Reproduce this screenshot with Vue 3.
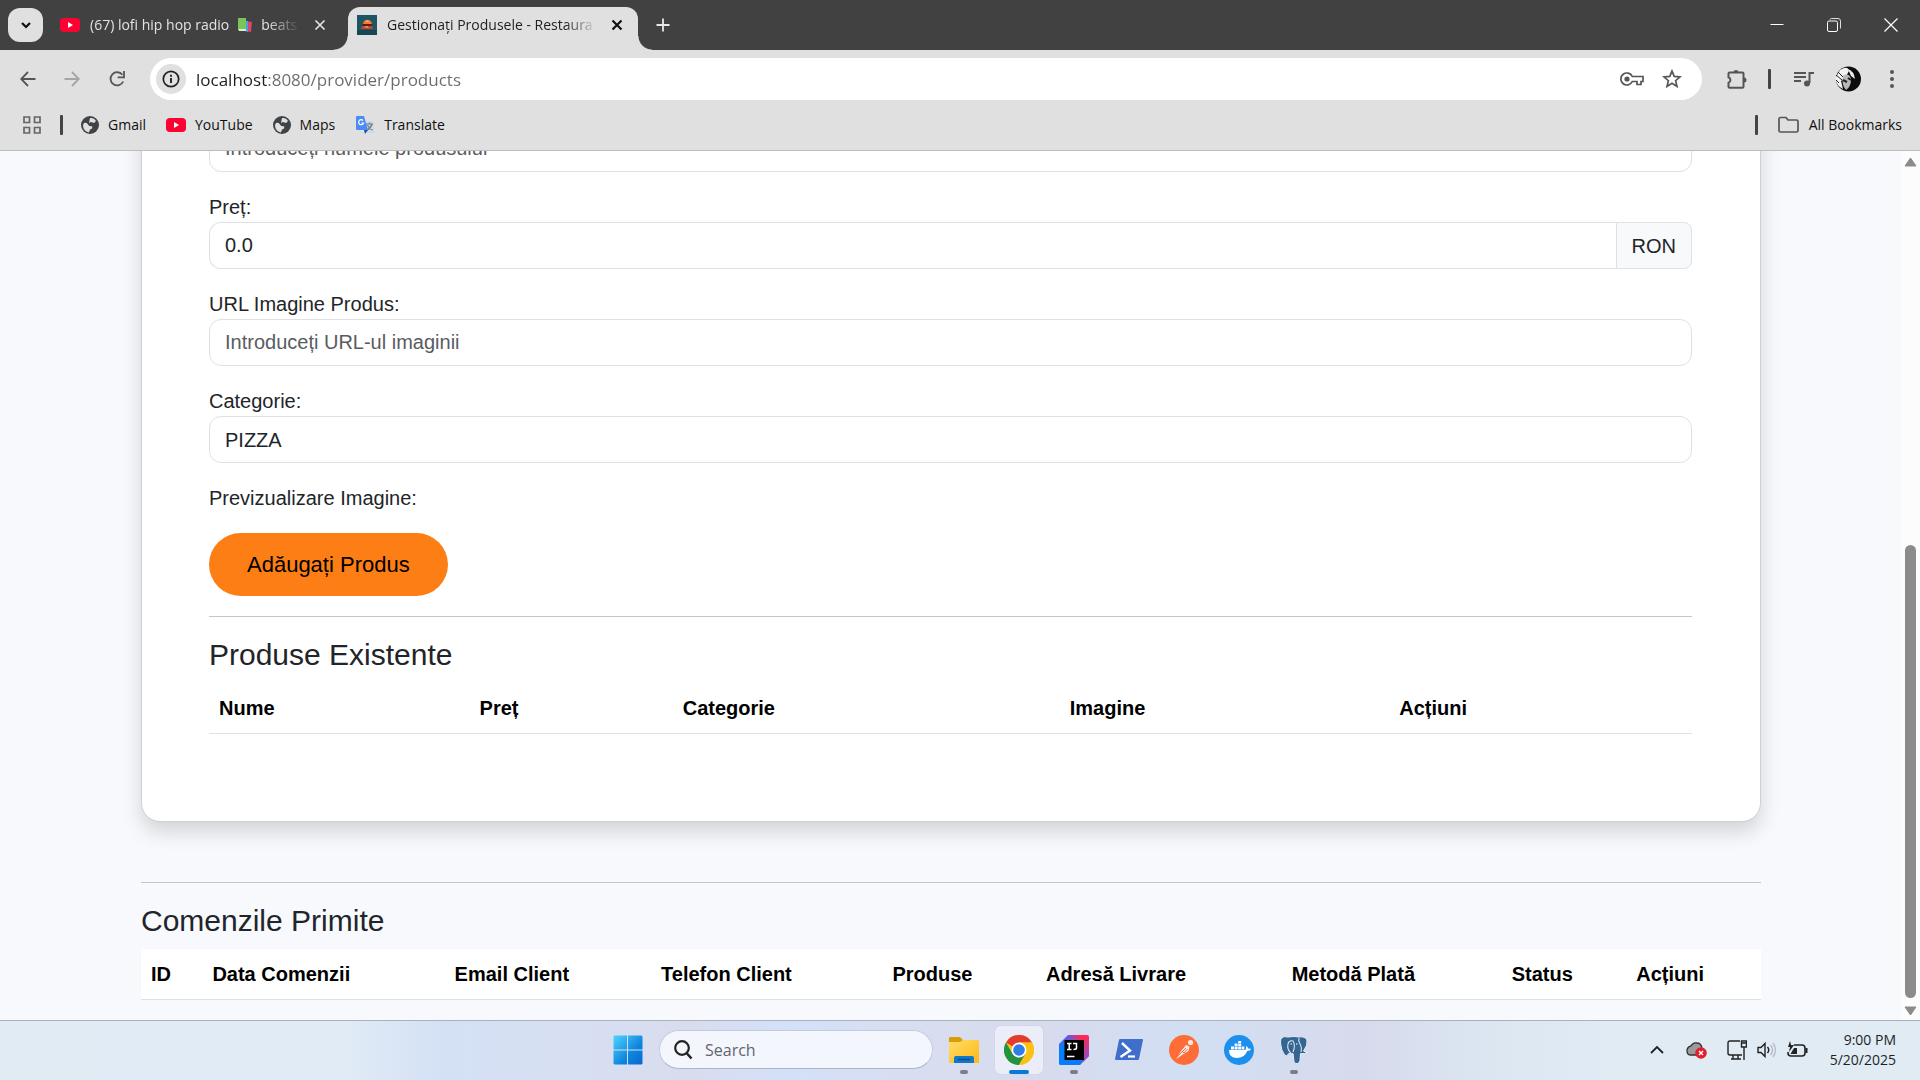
<script setup>
import { ref } from 'vue'

const address = ref('localhost:8080/provider/products')
const productName = ref('')
const price = ref('0.0')
const imageUrl = ref('')
const category = ref('PIZZA')

const productColumns = ['Nume', 'Preț', 'Categorie', 'Imagine', 'Acțiuni']
const orderColumns = [
  'ID',
  'Data Comenzii',
  'Email Client',
  'Telefon Client',
  'Produse',
  'Adresă Livrare',
  'Metodă Plată',
  'Status',
  'Acțiuni',
]
</script>

<template>
  <div class="desktop">
    <header class="browser">
      <div class="tabstrip">
        <button class="tab-search" aria-label="Search tabs">
          <svg width="12" height="12" viewBox="0 0 12 12"><path d="M2 4l4 4 4-4" fill="none" stroke="#111" stroke-width="2.2" /></svg>
        </button>
        <div class="tab">
          <svg class="fav" width="20" height="20" viewBox="0 0 20 20"><rect y="3" width="20" height="14" rx="4" fill="#ff0033" /><path d="M8 7v6l5-3z" fill="#fff" /></svg>
          <span class="tab-title">
            <span>(67) lofi hip hop radio</span>
            <svg width="16" height="16" viewBox="0 0 16 16"><path d="M8 4l7 1-1 10-6-1z" fill="#e2436b" /><path d="M5 3l6 1v11l-6-2z" fill="#37a7e8" /><path d="M1 1h8v11H1z" fill="#7cc35a" /><path d="M1 12h8v2H2z" fill="#d8efcd" /></svg>
            <span>beats</span>
          </span>
          <button class="tab-close" aria-label="Close tab">
            <svg width="12" height="12" viewBox="0 0 12 12"><path d="M1.500 1.500l9 9M10.500 1.500l-9 9" stroke="#e3e3e3" stroke-width="1.700" /></svg>
          </button>
        </div>
        <div class="tab active">
          <svg class="fav" width="20" height="20" viewBox="0 0 20 20"><rect width="20" height="20" fill="#1d5566" /><rect y="15" width="20" height="5" fill="#174654" /><path d="M6 9c0-5 8-6 9 0z" fill="#f07b2c" /><path d="M5 9h11l-2 2H6z" fill="#5b1d16" /><path d="M5 11h10l1 3H4z" fill="#c4432a" /><path d="M8 7l3-2 1 2zM7 12l3-1 2 2z" fill="#ffb060" /></svg>
          <span class="tab-title">Gestionați Produsele - Restaura</span>
          <button class="tab-close" aria-label="Close tab">
            <svg width="12" height="12" viewBox="0 0 12 12"><path d="M1.500 1.500l9 9M10.500 1.500l-9 9" stroke="#111" stroke-width="2.200" /></svg>
          </button>
        </div>
        <button class="new-tab" aria-label="New tab">
          <svg width="14" height="14" viewBox="0 0 14 14"><path d="M7 0.500v13M0.500 7h13" stroke="#e8e8e8" stroke-width="1.800" /></svg>
        </button>
        <div class="window-controls">
          <button aria-label="Minimize"><svg width="14" height="14" viewBox="0 0 14 14"><path d="M0.500 6.500h13" stroke="#fff" /></svg></button>
          <button aria-label="Restore"><svg width="14" height="14" viewBox="0 0 14 14"><rect x="0.500" y="3" width="10" height="10.500" rx="1.500" fill="none" stroke="#fff" /><path d="M3 1.500Q3 0.500 4.500 0.500H11q2.500 0 2.500 2.500v7.500" fill="none" stroke="#ddd" /></svg></button>
          <button aria-label="Close"><svg width="14" height="14" viewBox="0 0 14 14"><path d="M0.500 0.500l13 13M13.500 0.500l-13 13" stroke="#fff" stroke-width="1.200" /></svg></button>
        </div>
      </div>

      <div class="toolbar">
        <button class="nav-btn" aria-label="Back"><svg width="16" height="16" viewBox="0 0 16 16"><path d="M15.500 8H1.500M8 1L1.200 8 8 15" fill="none" stroke="#555" stroke-width="1.800" /></svg></button>
        <button class="nav-btn" aria-label="Forward" disabled><svg width="16" height="16" viewBox="0 0 16 16"><path d="M0.500 8h14M8 1l6.800 7L8 15" fill="none" stroke="#a5a5a5" stroke-width="1.800" /></svg></button>
        <button class="nav-btn" aria-label="Reload"><svg width="18" height="18" viewBox="0 0 18 18"><path d="M16.200 11.500a6.600 6.600 0 1 1-.8-6.700" fill="none" stroke="#555" stroke-width="1.800" /><path d="M17 1v6.300H10.700" fill="none" stroke="#555" stroke-width="1.800" /></svg></button>
        <div class="omnibox">
          <button class="site-info" aria-label="View site information"><svg width="18" height="18" viewBox="0 0 18 18"><circle cx="9" cy="9" r="7.700" fill="none" stroke="#222" stroke-width="1.700" /><path d="M9 8v5M9 4.800v1.900" stroke="#222" stroke-width="1.900" /></svg></button>
          <input v-model="address" class="address" type="text" aria-label="Address" spellcheck="false" />
          <button class="icon-btn" aria-label="Manage passwords"><svg width="24" height="16" viewBox="0 0 24 16"><path d="M12.300 5.500A6 6 0 1 0 12.300 10.500H17v3h4v-3h2v-5z" fill="none" stroke="#555" stroke-width="1.700" /><circle cx="7" cy="8" r="2.600" fill="#555" /></svg></button>
          <button class="icon-btn" aria-label="Bookmark this tab"><svg width="20" height="20" viewBox="0 0 20 20"><path d="M10 2l2.200 5.400 5.800.5-4.400 3.800 1.400 5.700-5-3.100-5 3.100 1.400-5.700L2 7.900l5.800-.5z" fill="none" stroke="#555" stroke-width="1.700" /></svg></button>
        </div>
        <button class="ext" aria-label="Extensions"><svg width="22" height="22" viewBox="0 0 22 22"><path d="M3.500 4.500h13q1 0 1 1v13.300q0 1-1 1h-13q-1 0-1-1v-4a3 3 0 0 0 0-5.600V5.500q0-1 1-1z" fill="none" stroke="#555" stroke-width="2" /><path d="M7.500 4.500a2.500 2.500 0 0 1 5 0zM18 9.500a2.500 2.500 0 0 1 0 5z" fill="#555" /></svg></button>
        <span class="divider"></span>
        <button class="media" aria-label="Media controls"><svg width="20" height="18" viewBox="0 0 20 18"><path d="M0 3h12M0 7h12M0 11h7" stroke="#555" stroke-width="1.800" /><path d="M15.500 13V3H20" fill="none" stroke="#555" stroke-width="2" /><circle cx="13" cy="13.500" r="3" fill="#555" /></svg></button>
        <button class="profile" aria-label="Profile"><svg width="26" height="26" viewBox="0 0 26 26"><circle cx="13.500" cy="13" r="12.500" fill="#0c0c0c" /><path d="M5 4q8-5 9 1l-4 7-4 3 2 8Q0 19 1 11z" fill="#f3f3f3" /><path d="M1 9l6 5M3 6l5 5M1 14l3 3" stroke="#222" /><path d="M8 10q6-4 8 3 0 8-5 11-5-5-3-14z" fill="#b8b8b8" /><path d="M8 14l4 2M13 12l3 2" stroke="#222" stroke-width="2" /><path d="M13 3q6 2 7 10l-4-3z" fill="#eee" /></svg></button>
        <button class="menu" aria-label="Menu"><svg width="6" height="20" viewBox="0 0 6 20"><circle cx="3" cy="3" r="2" fill="#555" /><circle cx="3" cy="10" r="2" fill="#555" /><circle cx="3" cy="17" r="2" fill="#555" /></svg></button>
      </div>

      <nav class="bookmarks">
        <button class="apps" aria-label="Apps"><svg width="18" height="18" viewBox="0 0 18 18"><path d="M1 1h5.500v5.500H1zM11.500 1H17v5.500h-5.500zM1 11.500h5.500V17H1zM11.500 11.500H17V17h-5.500z" fill="none" stroke="#666" stroke-width="1.700" /></svg></button>
        <span class="divider"></span>
        <a href="#gmail"><svg width="18" height="18" viewBox="0 0 18 18"><circle cx="9" cy="9" r="9" fill="#3f4246" /><path d="M3 7q3-1 4 1.500T11 10q1 3-2 3.500l-1 3Q2 15 2 9zM9 2q4-.5 6 3l-2 2-3-1-2 1z" fill="#e0e0e0" /></svg>Gmail</a>
        <a href="#youtube"><svg width="20" height="18" viewBox="0 0 20 18"><rect y="2" width="20" height="14" rx="4" fill="#ff0033" /><path d="M8 6v6l5-3z" fill="#fff" /></svg>YouTube</a>
        <a href="#maps"><svg width="18" height="18" viewBox="0 0 18 18"><circle cx="9" cy="9" r="9" fill="#3f4246" /><path d="M3 7q3-1 4 1.500T11 10q1 3-2 3.500l-1 3Q2 15 2 9zM9 2q4-.5 6 3l-2 2-3-1-2 1z" fill="#e0e0e0" /></svg>Maps</a>
        <a href="#translate"><svg width="20" height="20" viewBox="0 0 20 20"><path d="M8 6h10q1 0 1 1v10q0 1-1 1h-6z" fill="#d5d8dc" /><path d="M11 9h7M14.500 7.500V9M17 9q-1 4-5 6M12.500 10q2 4 5 5" fill="none" stroke="#5f7d95" stroke-width="1.200" /><path d="M2 1h7l4 14H2q-1 0-1-1V2q0-1 1-1z" fill="#4b8bf5" /><path d="M9 15h4l-3 4z" fill="#2049b4" /><path d="M8 5.500A2.500 2.500 0 1 0 8.500 8H6.500" fill="none" stroke="#fff" stroke-width="1.200" /></svg>Translate</a>
        <span class="spacer"></span>
        <span class="divider"></span>
        <a class="all" href="#bookmarks"><svg width="21" height="18" viewBox="0 0 21 18"><path d="M1 3q0-1.500 1.500-1.500H8l2 2.500h8.500Q20 4 20 5.500v9q0 1.500-1.500 1.500h-16Q1 16 1 14.500z" fill="none" stroke="#555" stroke-width="1.700" /></svg>All Bookmarks</a>
      </nav>
    </header>

    <div class="viewport">
      <main class="page">
        <section class="card">
          <form @submit.prevent>
            <div class="field">
              <input v-model="productName" class="control" type="text" aria-label="Nume" placeholder="Introduceți numele produsului" />
            </div>
            <div class="field">
              <label for="price">Preț:</label>
              <div class="group">
                <input id="price" v-model="price" class="control" type="text" inputmode="decimal" />
                <span class="unit">RON</span>
              </div>
            </div>
            <div class="field">
              <label for="image-url">URL Imagine Produs:</label>
              <input id="image-url" v-model="imageUrl" class="control" type="text" placeholder="Introduceți URL-ul imaginii" />
            </div>
            <div class="field">
              <label for="category">Categorie:</label>
              <select id="category" v-model="category" class="control">
                <option>PIZZA</option>
              </select>
            </div>
            <p class="preview">Previzualizare Imagine:</p>
            <button class="submit" type="submit">Adăugați Produs</button>
          </form>
          <hr />
          <h2>Produse Existente</h2>
          <table>
            <thead>
              <tr><th v-for="c in productColumns" :key="c" scope="col">{{ c }}</th></tr>
            </thead>
          </table>
        </section>
        <section class="orders">
          <hr />
          <h2>Comenzile Primite</h2>
          <table>
            <thead>
              <tr><th v-for="c in orderColumns" :key="c" scope="col">{{ c }}</th></tr>
            </thead>
          </table>
        </section>
      </main>
      <div class="scrollbar" aria-hidden="true">
        <svg width="13" height="10" viewBox="0 0 13 10"><path d="M6.500 1L12 9H1z" fill="#8b8b8b" stroke="#8b8b8b" stroke-linejoin="round" /></svg>
        <div class="track"><div class="thumb"></div></div>
        <svg width="13" height="10" viewBox="0 0 13 10"><path d="M6.500 9L12 1H1z" fill="#8b8b8b" stroke="#8b8b8b" stroke-linejoin="round" /></svg>
      </div>
    </div>

    <footer class="taskbar">
      <div class="apps-row">
        <button class="tile start" aria-label="Start">
          <svg width="30" height="30" viewBox="0 0 30 30">
            <defs><linearGradient id="win" x1="0" y1="0" x2="1" y2="1"><stop offset="0" stop-color="#4fd5ff" /><stop offset="0.600" stop-color="#0f86dd" /><stop offset="1" stop-color="#0669cf" /></linearGradient></defs>
            <path d="M1.500 0.500H14v14H0.500v-13zM15 .5h13.500l1 1v13H15zM.5 15.500H14v14H1.500l-1-1zM15 15.500h14.500v13l-1 1H15z" fill="url(#win)" />
          </svg>
        </button>
        <label class="search">
          <svg width="19" height="20" viewBox="0 0 19 20"><circle cx="8" cy="8" r="6.800" fill="none" stroke="#222" stroke-width="2.200" /><path d="M12.500 13l5 5.500" stroke="#222" stroke-width="2.600" /></svg>
          <input type="search" placeholder="Search" aria-label="Search" />
        </label>
        <button class="tile open" aria-label="File Explorer">
          <svg width="30" height="30" viewBox="0 0 30 30">
            <defs><linearGradient id="fold" x1="0" y1="0" x2="1" y2="1"><stop offset="0" stop-color="#ffdd69" /><stop offset="1" stop-color="#fcb915" /></linearGradient></defs>
            <path d="M0 3q0-1 1-1h10l3 3v4H0z" fill="#dd9b04" /><path d="M0 7h11l3-2h15q1 0 1 1v21q0 1-1 1H1q-1 0-1-1z" fill="url(#fold)" /><path d="M5 28v-5q0-2 2-2h16q2 0 2 2v5z" fill="#0f78c8" /><path d="M9 24.500h12" stroke="#0a4c85" stroke-width="1.500" />
          </svg>
        </button>
        <button class="tile current" aria-label="Google Chrome">
          <svg width="30" height="30" viewBox="0 0 30 30">
            <circle cx="15" cy="15" r="15" fill="#fbc116" /><path d="M15 15L2 7.500A15 15 0 0 1 28 7.500H15z" fill="#e33b2e" /><path d="M2 7.500A15 15 0 0 0 15 30L21.500 18.750 8.500 18.750z" fill="#229342" /><path d="M15 7.500h13A15 15 0 0 1 15 30l6.500-11.250z" fill="#fbc116" /><circle cx="15" cy="15" r="7.500" fill="#fff" /><circle cx="15" cy="15" r="5.800" fill="#2f7de9" />
          </svg>
        </button>
        <button class="tile open" aria-label="IntelliJ IDEA">
          <svg width="30" height="30" viewBox="0 0 30 30">
            <defs><linearGradient id="ij" x1="0" y1="0.600" x2="1" y2="0.200"><stop offset="0" stop-color="#0a7dff" /><stop offset="0.450" stop-color="#6b57dd" /><stop offset="0.800" stop-color="#fe2857" /></linearGradient><linearGradient id="ijr" x1="0" y1="0" x2="0" y2="1"><stop offset="0" stop-color="#fe2857" /><stop offset="1" stop-color="#7a55d8" /></linearGradient></defs>
            <path d="M9 0h19q2 0 2 2v19l-9 9H2q-2 0-2-2V9z" fill="url(#ij)" /><path d="M24 4l6-2v19l-6 6z" fill="url(#ijr)" /><path d="M0 11l7-2v16h17l-3 5H2q-2 0-2-2z" fill="#087cfa" /><rect x="5.500" y="5" width="19.500" height="20" fill="#000" /><path d="M8 8.500h4.500M10.200 8.500v6M8 14.500h4.500M14 8.500h3.500v4.500q0 1.500-3 1.500M8 21.500h7.500" fill="none" stroke="#fff" stroke-width="1.500" />
          </svg>
        </button>
        <button class="tile" aria-label="PowerShell">
          <svg width="30" height="30" viewBox="0 0 30 30">
            <path d="M6 4h22q1.200 0 1 1l-4 19q-.3 1-1.300 1H2q-1.200 0-1-1L5 5q.2-1 1-1z" fill="#3f6fcb" /><path d="M8 8l8 7.500L6.500 22" fill="none" stroke="#fff" stroke-width="2.400" /><path d="M14 21.500h7" stroke="#fff" stroke-width="2.200" />
          </svg>
        </button>
        <button class="tile" aria-label="Postman">
          <svg width="30" height="30" viewBox="0 0 30 30">
            <circle cx="15" cy="15" r="15" fill="#ff6c37" /><circle cx="21.500" cy="7.500" r="2.600" fill="#fbe8df" /><path d="M17 10l3.500 1.500-1 4.500-5 3-7.500 5 5-8z" fill="#fbe8df" /><path d="M7.500 22.500L17 13M13 16l2 2L18.500 14" fill="none" stroke="#d9603a" stroke-width="0.800" />
          </svg>
        </button>
        <button class="tile" aria-label="Docker">
          <svg width="30" height="30" viewBox="0 0 30 30">
            <circle cx="15" cy="15" r="15" fill="#1d90ee" /><path d="M5 15h16q1.500-.5 1-4 2 .5 2.200 2.500 1.500-.3 3 .5-1 2-4 2Q20.500 23 13 23 5 23 5 15z" fill="#fff" /><path d="M7 11.500h3v3H7zM10.600 11.500h3v3h-3zM14.200 11.500h3v3h-3zM17.800 11.500h2.500v3h-2.500zM10.600 8.500h3V11h-3zM14.200 8.500h3V11h-3zM14.200 6h3v2h-3z" fill="#fff" />
          </svg>
        </button>
        <button class="tile open" aria-label="pgAdmin">
          <svg width="30" height="30" viewBox="0 0 30 30">
            <path d="M9 2Q1 0 1.500 8q.5 7 4 12 2 2 4-1l1.500-1.500q2 1.500 3 1l1 8q1 3 3.500 2t2.500-3l.5-7q4 1 7-1.500-3 0-4-1Q29 10 28 5q-2-4-8-3-5-1-11 0z" fill="#336791" stroke="#e6edf5" stroke-width="1" /><path d="M11 17q-3-3-2-8 1-4 5-3 2 3 1 8l-1 3M20 3q-1 3 1 6t1 8" fill="none" stroke="#dce6f0" stroke-width="1.100" /><path d="M17 9h1.500M11.500 9H13" stroke="#fff" stroke-width="1.200" />
          </svg>
        </button>
      </div>
      <div class="tray">
        <button class="t-chevron" aria-label="Show hidden icons"><svg width="14" height="10" viewBox="0 0 14 10"><path d="M1 8l6-6 6 6" fill="none" stroke="#222" stroke-width="1.800" /></svg></button>
        <button class="t-cloud" aria-label="OneDrive"><svg width="21" height="18" viewBox="0 0 21 18"><path d="M5 14q-4 0-4-4t4-5q2-4 6-3 4 0 5 5l2 7z" fill="#9b9b9b" stroke="#333" stroke-width="1.300" /><circle cx="15" cy="12" r="5.800" fill="#e01f2d" /><path d="M13 10l4 4M17 10l-4 4" stroke="#fff" stroke-width="1.400" /></svg></button>
        <button class="t-status" aria-label="Network, volume, battery">
          <svg width="20" height="20" viewBox="0 0 20 20"><path d="M13 1H3Q1 1 1 3v10q0 2 2 2h12M6 15v4M11 15v4M4 19h10" fill="none" stroke="#222" stroke-width="1.400" /><path d="M14.500 1h5v6h-5zM14.500 3h5M17 7v13" fill="none" stroke="#222" stroke-width="1.400" /></svg>
          <svg width="20" height="18" viewBox="0 0 20 18"><path d="M1 6.500h3l4-4v13l-4-4H1z" fill="none" stroke="#222" stroke-width="1.400" /><path d="M10.500 6q2.500 3 0 6" fill="none" stroke="#222" stroke-width="1.400" /><path d="M13.500 4q4 5 0 10M16 2q5 7 0 14" fill="none" stroke="#b4bcc5" stroke-width="1.300" /></svg>
          <svg width="21" height="18" viewBox="0 0 21 18"><path d="M7 4h8q3 0 3 3v5q0 3-3 3H4q-3 0-3-3v-1" fill="none" stroke="#222" stroke-width="1.600" /><path d="M3.500 13L7 7h3v6z" fill="#222" /><path d="M3 0L1 6h2L2 11l5-7H4z" fill="#222" /><path d="M19.500 7v5" stroke="#222" stroke-width="2" /></svg>
        </button>
        <time class="clock"><span>9:00 PM</span><span>5/20/2025</span></time>
      </div>
    </footer>
  </div>
</template>

<style>
html,
body {
  margin: 0;
  height: 100%;
  overflow: hidden;
}
</style>

<style scoped>
* {
  box-sizing: border-box;
}
.desktop {
  display: flex;
  flex-direction: column;
  height: 100vh;
  font-family: "Open Sans", "Noto Sans", sans-serif;
  font-size: 14px;
  color: #1f1f1f;
}
button {
  display: flex;
  align-items: center;
  justify-content: center;
  flex: none;
  padding: 0;
  border: 0;
  background: none;
  font: inherit;
}
svg {
  display: block;
  flex: none;
}

/* Browser frame */
.browser {
  flex: none;
  background: #e0e0e0;
  border-bottom: 1px solid #bdbdbd;
}
.tabstrip {
  display: flex;
  align-items: flex-end;
  height: 50px;
  padding-left: 8px;
  background: #414141;
}
.tab-search {
  align-self: center;
  width: 35px;
  height: 34px;
  border-radius: 12px;
  background: #e0e0e0;
}
.tab {
  display: flex;
  align-items: center;
  width: 290px;
  height: 43px;
  margin-left: 8px;
  padding: 0 15px 7px 9px;
  color: #e3e3e3;
}
.tab .tab-title {
  display: flex;
  align-items: center;
  gap: 8px;
  flex: 1;
  margin: 0 14px 0 10px;
  overflow: hidden;
  white-space: nowrap;
  line-height: 20px;
  mask-image: linear-gradient(to left, transparent, #000 32px);
}
.tab-close {
  width: 12px;
  height: 20px;
}
.tab.active {
  position: relative;
  margin-left: 7px;
  border-radius: 12px 12px 0 0;
  background: #e0e0e0;
  color: #1f1f1f;
}
.tab.active::before,
.tab.active::after {
  content: "";
  position: absolute;
  bottom: 0;
  width: 14px;
  height: 14px;
}
.tab.active::before {
  left: -14px;
  background: radial-gradient(circle at 0 0, transparent 13px, #e0e0e0 14px);
}
.tab.active::after {
  right: -14px;
  background: radial-gradient(circle at 100% 0, transparent 13px, #e0e0e0 14px);
}
.new-tab {
  width: 34px;
  height: 34px;
  margin: 0 0 8px 8px;
}
.window-controls {
  display: flex;
  align-self: stretch;
  margin: 0 1px 0 auto;
}
.window-controls button {
  width: 57px;
  height: 49px;
}

.toolbar {
  display: flex;
  align-items: center;
  height: 58px;
  padding-left: 6px;
}
.nav-btn {
  width: 44px;
  height: 36px;
}
.omnibox {
  display: flex;
  align-items: center;
  flex: 1;
  height: 42px;
  margin-left: 12px;
  padding: 0 10px 0 6px;
  border-radius: 21px;
  background: #fff;
}
.site-info {
  width: 30px;
  height: 30px;
  border-radius: 15px;
  background: #e0e0e0;
}
.address {
  flex: 1;
  height: 40px;
  margin-left: 10px;
  padding: 0;
  border: 0;
  outline: 0;
  font: inherit;
  font-size: 17px;
  color: transparent;
  background: linear-gradient(to right, #1f1f1f 71px, #6b6b6b 71px);
  background-clip: text;
}
.icon-btn {
  width: 40px;
  height: 36px;
}
.divider {
  flex: none;
  width: 3px;
  height: 20px;
  border-radius: 1px;
  background: #444;
}
.ext {
  width: 42px;
  margin: 0 10px 0 14px;
}
.media {
  width: 40px;
  margin-left: 13px;
}
.profile {
  width: 48px;
}
.menu {
  width: 40px;
  margin-right: 8px;
}

.bookmarks {
  display: flex;
  align-items: center;
  height: 42px;
  padding: 0 18px 9px 23px;
}
.bookmarks .divider {
  margin-right: 18px;
}
.apps {
  margin-right: 19px;
}
.bookmarks a {
  display: flex;
  align-items: center;
  gap: 9px;
  margin-right: 20px;
  color: #111;
  text-decoration: none;
}
.bookmarks .all {
  gap: 10px;
  margin-right: 0;
}
.bookmarks .spacer {
  flex: 1;
}
.spacer + .divider {
  margin-right: 20px;
}

/* Scrolled page */
.viewport {
  display: flex;
  flex: 1;
  min-height: 0;
  background: #f8f9fd;
}
.page {
  display: flex;
  flex: 1;
  flex-direction: column;
  justify-content: flex-end;
  overflow: hidden;
  padding: 0 140px 20px 141px;
  font-family: "Liberation Sans", Arial, sans-serif;
  font-size: 20px;
  line-height: 30px;
  color: #212529;
}
.card {
  flex: none;
  padding: 67px 68px 87px 67px;
  border: 1px solid #ced0d3;
  border-radius: 19px;
  background: #fff;
  box-shadow: 0 10px 20px rgba(0, 0, 0, 0.15);
}
.orders {
  flex: none;
  margin-top: 40px;
}
.field {
  margin-bottom: 20px;
}
.field label {
  display: block;
}
.control {
  display: block;
  width: 100%;
  height: 47px;
  padding: 0 15px;
  border: 1px solid #dee2e6;
  border-radius: 12px;
  background: #fff;
  font: inherit;
  color: #212529;
  appearance: none;
  outline: 0;
}
.control::placeholder {
  color: #595c5f;
  opacity: 1;
}
.group {
  display: flex;
}
.group .control {
  flex: 1;
  border-right: 0;
  border-radius: 12px 0 0 12px;
}
.unit {
  display: flex;
  align-items: center;
  padding: 0 15px;
  border: 1px solid #dee2e6;
  border-radius: 0 8px 8px 0;
  background: #f8f9fa;
}
.preview {
  margin: 0 0 20px;
}
.submit {
  height: 63px;
  padding: 0 38px;
  border-radius: 32px;
  background: #fd7e14;
  font-size: 22px;
  color: #000;
}
hr {
  height: 1px;
  margin: 20px 0;
  border: 0;
  background: #c5c6c9;
}
h2 {
  margin: 0 0 10px;
  font-size: 30px;
  font-weight: 400;
  line-height: 36px;
}
table {
  width: 100%;
  border-collapse: collapse;
}
th {
  padding: 10px;
  border-bottom: 1px solid #dee2e6;
  background: #fff;
  color: #000;
  font-weight: 700;
  text-align: left;
}

.scrollbar {
  display: flex;
  flex: none;
  flex-direction: column;
  align-items: center;
  width: 19px;
  padding: 6px 0 4px;
  background: #fcfcfc;
}
.track {
  display: flex;
  flex: 1;
  flex-direction: column;
  justify-content: flex-end;
  padding: 8px 0;
}
.thumb {
  width: 11px;
  height: 55%;
  border-radius: 6px;
  background: #8b8b8b;
}

/* Taskbar */
.taskbar {
  display: grid;
  flex: none;
  grid-template-columns: 1fr auto 1fr;
  align-items: center;
  height: 60px;
  border-top: 1px solid #aab0bd;
  background: linear-gradient(to right, #e0ebf4 0%, #e0ebf5 18%, #d4e1f5 23%, #d7dff2 30%, #d9dcef 36%, #d3e1f8 41%, #d8def1 47%, #d7dbee 54%, #d2dff3 62%, #d7daec 71%, #dce7f2 78%, #e0ebf4 84%);
}
.apps-row {
  display: flex;
  grid-column: 2;
  align-items: center;
  gap: 7px;
  padding: 0 0 2px 2px;
}
.tile {
  position: relative;
  width: 48px;
  height: 48px;
  border-radius: 5px;
}
.tile.current {
  background: #ebeef8;
  box-shadow: 0 0 1px #aab0c5;
}
.tile.open::after,
.tile.current::after {
  content: "";
  position: absolute;
  bottom: 0;
  left: 20px;
  width: 8px;
  height: 4px;
  border-radius: 2px;
  background: #7b7e88;
}
.tile.current::after {
  left: 14px;
  width: 20px;
  background: #0a78d4;
}
.search {
  display: flex;
  align-items: center;
  gap: 12px;
  width: 274px;
  height: 39px;
  padding: 0 14px;
  border: 1px solid #c6cce0;
  border-bottom-color: #aeb5ca;
  border-radius: 20px;
  background: #f3f6fd;
}
.search input {
  flex: 1;
  min-width: 0;
  height: 30px;
  padding: 0;
  border: 0;
  outline: 0;
  background: none;
  font: inherit;
  font-size: 16px;
  appearance: none;
}
.search input::placeholder {
  color: #62656c;
  opacity: 1;
}
.tray {
  display: flex;
  grid-column: 3;
  align-items: center;
  justify-content: flex-end;
  padding: 0 24px 2px 0;
}
.t-cloud {
  margin-left: 22px;
}
.t-status {
  gap: 10px;
  margin: 0 22px 0 20px;
}
.clock {
  display: flex;
  flex-direction: column;
  text-align: right;
  line-height: 20px;
}
</style>
